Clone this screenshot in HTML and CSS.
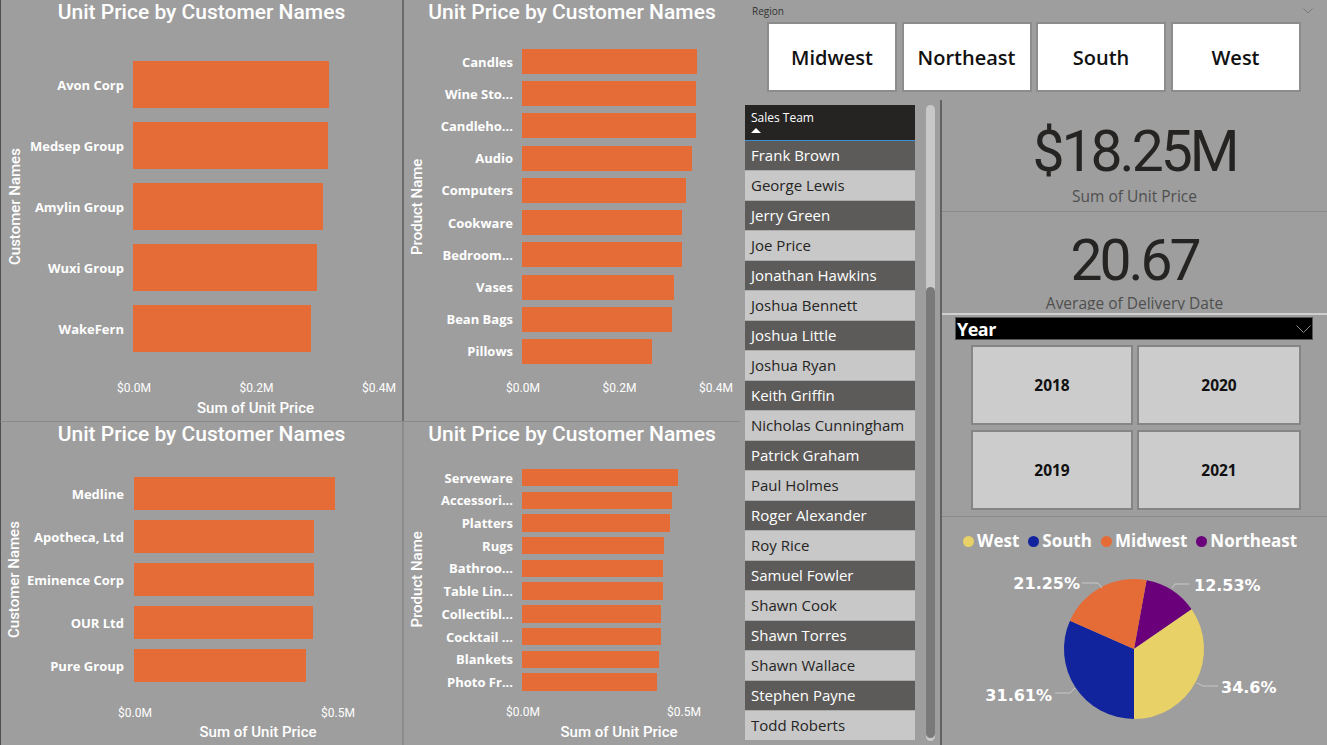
FILE: index.html
```html
<!DOCTYPE html>
<html lang="en">
<head>
<meta charset="utf-8">
<title>Sales Dashboard</title>
<link rel="stylesheet" href="styles.css">
</head>
<body>
<div class="dash">
  <div class="charts">
    <section class="chart chart-a">
      <h2 class="chart-title">Unit Price by Customer Names</h2>
      <div class="chart-body">
        <div class="y-title">Customer Names</div>
        <div class="rows">
          <div class="row"><span class="lbl">Avon Corp</span><span class="bar" style="width:196px"></span></div>
          <div class="row"><span class="lbl">Medsep Group</span><span class="bar" style="width:195px"></span></div>
          <div class="row"><span class="lbl">Amylin Group</span><span class="bar" style="width:190px"></span></div>
          <div class="row"><span class="lbl">Wuxi Group</span><span class="bar" style="width:184px"></span></div>
          <div class="row"><span class="lbl">WakeFern</span><span class="bar" style="width:178px"></span></div>
        </div>
      </div>
      <div class="ticks"><span class="tick"><span>$0.0M</span></span><span class="tick"><span>$0.2M</span></span><span class="tick"><span>$0.4M</span></span></div>
      <div class="x-title">Sum of Unit Price</div>
    </section>

    <section class="chart chart-b">
      <h2 class="chart-title">Unit Price by Customer Names</h2>
      <div class="chart-body">
        <div class="y-title">Product Name</div>
        <div class="rows">
          <div class="row"><span class="lbl">Candles</span><span class="bar" style="width:175px"></span></div>
          <div class="row"><span class="lbl">Wine Sto...</span><span class="bar" style="width:174px"></span></div>
          <div class="row"><span class="lbl">Candleho...</span><span class="bar" style="width:174px"></span></div>
          <div class="row"><span class="lbl">Audio</span><span class="bar" style="width:170px"></span></div>
          <div class="row"><span class="lbl">Computers</span><span class="bar" style="width:164px"></span></div>
          <div class="row"><span class="lbl">Cookware</span><span class="bar" style="width:160px"></span></div>
          <div class="row"><span class="lbl">Bedroom...</span><span class="bar" style="width:160px"></span></div>
          <div class="row"><span class="lbl">Vases</span><span class="bar" style="width:152px"></span></div>
          <div class="row"><span class="lbl">Bean Bags</span><span class="bar" style="width:150px"></span></div>
          <div class="row"><span class="lbl">Pillows</span><span class="bar" style="width:130px"></span></div>
        </div>
      </div>
      <div class="ticks"><span class="tick"><span>$0.0M</span></span><span class="tick"><span>$0.2M</span></span><span class="tick"><span>$0.4M</span></span></div>
    </section>

    <section class="chart chart-c">
      <h2 class="chart-title">Unit Price by Customer Names</h2>
      <div class="chart-body">
        <div class="y-title">Customer Names</div>
        <div class="rows">
          <div class="row"><span class="lbl">Medline</span><span class="bar" style="width:201px"></span></div>
          <div class="row"><span class="lbl">Apotheca, Ltd</span><span class="bar" style="width:180px"></span></div>
          <div class="row"><span class="lbl">Eminence Corp</span><span class="bar" style="width:180px"></span></div>
          <div class="row"><span class="lbl">OUR Ltd</span><span class="bar" style="width:179px"></span></div>
          <div class="row"><span class="lbl">Pure Group</span><span class="bar" style="width:172px"></span></div>
        </div>
      </div>
      <div class="ticks"><span class="tick"><span>$0.0M</span></span><span class="tick"><span>$0.5M</span></span></div>
      <div class="x-title">Sum of Unit Price</div>
    </section>

    <section class="chart chart-d">
      <h2 class="chart-title">Unit Price by Customer Names</h2>
      <div class="chart-body">
        <div class="y-title">Product Name</div>
        <div class="rows">
          <div class="row"><span class="lbl">Serveware</span><span class="bar" style="width:156px"></span></div>
          <div class="row"><span class="lbl">Accessori...</span><span class="bar" style="width:150px"></span></div>
          <div class="row"><span class="lbl">Platters</span><span class="bar" style="width:148px"></span></div>
          <div class="row"><span class="lbl">Rugs</span><span class="bar" style="width:142px"></span></div>
          <div class="row"><span class="lbl">Bathroo...</span><span class="bar" style="width:141px"></span></div>
          <div class="row"><span class="lbl">Table Lin...</span><span class="bar" style="width:141px"></span></div>
          <div class="row"><span class="lbl">Collectibl...</span><span class="bar" style="width:139px"></span></div>
          <div class="row"><span class="lbl">Cocktail ...</span><span class="bar" style="width:139px"></span></div>
          <div class="row"><span class="lbl">Blankets</span><span class="bar" style="width:137px"></span></div>
          <div class="row"><span class="lbl">Photo Fr...</span><span class="bar" style="width:135px"></span></div>
        </div>
      </div>
      <div class="ticks"><span class="tick"><span>$0.0M</span></span><span class="tick"><span>$0.5M</span></span></div>
      <div class="x-title">Sum of Unit Price</div>
    </section>
  </div>

  <div class="side">
    <section class="region">
      <div class="region-head">
        <span>Region</span>
        <svg class="chev" width="10" height="6" viewBox="0 0 10 6"><polyline points="0.5,0.5 5,5 9.5,0.5" fill="none" stroke="#7a7a7a" stroke-width="1"/></svg>
      </div>
      <div class="region-btns">
        <div class="region-btn">Midwest</div>
        <div class="region-btn">Northeast</div>
        <div class="region-btn">South</div>
        <div class="region-btn">West</div>
      </div>
    </section>

    <div class="side-body">
      <section class="team">
        <div class="team-list">
          <div class="team-head">
            <div>Sales Team</div>
            <div class="sort-tri"></div>
          </div>
          <div class="team-rows">
            <div class="trow dark">Frank Brown</div>
            <div class="trow light">George Lewis</div>
            <div class="trow dark">Jerry Green</div>
            <div class="trow light">Joe Price</div>
            <div class="trow dark">Jonathan Hawkins</div>
            <div class="trow light">Joshua Bennett</div>
            <div class="trow dark">Joshua Little</div>
            <div class="trow light">Joshua Ryan</div>
            <div class="trow dark">Keith Griffin</div>
            <div class="trow light">Nicholas Cunningham</div>
            <div class="trow dark">Patrick Graham</div>
            <div class="trow light">Paul Holmes</div>
            <div class="trow dark">Roger Alexander</div>
            <div class="trow light">Roy Rice</div>
            <div class="trow dark">Samuel Fowler</div>
            <div class="trow light">Shawn Cook</div>
            <div class="trow dark">Shawn Torres</div>
            <div class="trow light">Shawn Wallace</div>
            <div class="trow dark">Stephen Payne</div>
            <div class="trow light">Todd Roberts</div>
          </div>
        </div>
        <div class="scroll"><div class="thumb"></div></div>
      </section>

      <div class="side-right">
        <section class="kpi kpi-1">
          <div class="kpi-value">$18.25M</div>
          <div class="kpi-label">Sum of Unit Price</div>
        </section>
        <section class="kpi kpi-2">
          <div class="kpi-value">20.67</div>
          <div class="kpi-label">Average of Delivery Date</div>
        </section>
        <section class="year">
          <div class="year-head">
            <span>Year</span>
            <svg width="15" height="8" viewBox="0 0 15 8"><polyline points="0.5,0.5 7.5,7.5 14.5,0.5" fill="none" stroke="#8a8a8a" stroke-width="1"/></svg>
          </div>
          <div class="year-grid">
            <div class="year-btn">2018</div>
            <div class="year-btn">2020</div>
            <div class="year-btn">2019</div>
            <div class="year-btn">2021</div>
          </div>
        </section>
        <section class="pie">
          <div class="legend">
            <span class="leg"><span class="dot dot-west"></span>West</span>
            <span class="leg"><span class="dot dot-south"></span>South</span>
            <span class="leg"><span class="dot dot-mid"></span>Midwest</span>
            <span class="leg"><span class="dot dot-ne"></span>Northeast</span>
          </div>
          <svg class="pie-svg" width="385" height="182" viewBox="0 0 385 182">
            <path d="M192 86 L204.55 17.13 A70 70 0 0 1 249.65 46.30 Z" fill="#6b007b"/>
            <path d="M192 86 L249.65 46.30 A70 70 0 0 1 192 156 Z" fill="#e8d166"/>
            <path d="M192 86 L192 156 A70 70 0 0 1 127.95 57.75 Z" fill="#12239e"/>
            <path d="M192 86 L127.95 57.75 A70 70 0 0 1 204.55 17.13 Z" fill="#e66c37"/>
            <polyline class="leader" points="140,20 156,20 160,25"/>
            <polyline class="leader" points="230,25 233,21 247,21"/>
            <polyline class="leader" points="255,120 261,123 276,123"/>
            <polyline class="leader" points="113,130 128,130 133,125"/>
            <text class="pct" x="138" y="26" text-anchor="end">21.25%</text>
            <text class="pct" x="252" y="28">12.53%</text>
            <text class="pct" x="279" y="130">34.6%</text>
            <text class="pct" x="110" y="138" text-anchor="end">31.61%</text>
          </svg>
        </section>
      </div>
    </div>
  </div>
</div>
</body>
</html>
```
FILE: styles.css
```css
* { box-sizing: border-box; }

body {
  margin: 0;
  background: #9e9e9e;
  font-family: "Open Sans", "Noto Sans", sans-serif;
}

.dash {
  display: flex;
  width: 1327px;
  height: 745px;
  overflow: hidden;
  background: #9e9e9e;
}

/* ---------- bar charts ---------- */
.charts {
  flex: none;
  display: grid;
  grid-template-columns: 402px 338px;
  grid-template-rows: 421px 324px;
}

.chart {
  display: flex;
  flex-direction: column;
  overflow: hidden;
  color: #fff;
}

.chart-a {
  border-left: 1px solid #4f4f4f;
  --mt: 37px; --yw: 28px; --lw: 104px; --gap: 14px; --bh: 47px;
  --tm: 29px; --t0: 133px; --ts: 122.5px; --xl: 132px; --xw: 245px; --xm: 4px;
}
.chart-b {
  border-left: 2px solid #6b6b6b;
  --mt: 25px; --yw: 26px; --lw: 92px; --gap: 7.22px; --bh: 25px;
  --tm: 17px; --t0: 119px; --ts: 96.5px;
}
.chart-c {
  border-left: 1px solid #4f4f4f;
  border-top: 1px solid #8a8a8a;
  --mt: 31px; --yw: 26px; --lw: 107px; --gap: 10px; --bh: 33px;
  --tm: 23.5px; --t0: 134px; --ts: 203px; --xl: 133px; --xw: 248px; --xm: 3.5px;
}
.chart-d {
  border-left: 2px solid #8c8c8c;
  border-top: 1px solid #8a8a8a;
  --mt: 23px; --yw: 26px; --lw: 92px; --gap: 5.3px; --bh: 17.4px;
  --tm: 14.5px; --t0: 119px; --ts: 161px; --xl: 118px; --xw: 194px; --xm: 3.5px;
}

.chart-title {
  margin: 0;
  font: 500 21px Roboto, sans-serif;
  line-height: 24px;
  text-align: center;
  white-space: nowrap;
}

.chart-body {
  display: flex;
  margin-top: var(--mt);
}

.y-title {
  flex: none;
  width: var(--yw);
  writing-mode: vertical-rl;
  transform: rotate(180deg);
  text-align: center;
  font: 500 15px Roboto, sans-serif;
  line-height: var(--yw);
  white-space: nowrap;
}

.rows {
  display: flex;
  flex-direction: column;
  gap: var(--gap);
}

.row {
  display: flex;
  align-items: center;
  height: var(--bh);
}

.lbl {
  flex: none;
  width: var(--lw);
  padding-right: 9px;
  text-align: right;
  white-space: nowrap;
  font: 700 13px "Open Sans", sans-serif;
}
.chart-c .lbl { padding-right: 10px; }

.bar {
  height: 100%;
  background: #e66c37;
}

.ticks {
  display: flex;
  margin-top: var(--tm);
  padding-left: var(--t0);
  height: 14px;
  font: 400 12px Roboto, sans-serif;
  line-height: 14px;
  white-space: nowrap;
}
.tick { flex: none; width: var(--ts); }
.tick span { display: inline-block; transform: translateX(-50%); }

.x-title {
  margin-top: var(--xm);
  margin-left: var(--xl);
  width: var(--xw);
  text-align: center;
  font: 500 15px Roboto, sans-serif;
  line-height: 18px;
  white-space: nowrap;
}

/* ---------- right side ---------- */
.side {
  flex: none;
  width: 587px;
  display: flex;
  flex-direction: column;
}

.region {
  height: 100px;
  padding: 4px 14px 0 12px;
}
.region-head {
  display: flex;
  justify-content: space-between;
  align-items: center;
  height: 14px;
  font: 400 10px "Open Sans", sans-serif;
  line-height: 14px;
  color: #333;
}
.region-btns {
  display: flex;
  gap: 4.5px;
  margin: 4px 0 0 15px;
}
.region-btn {
  width: 130px;
  height: 70px;
  background: #fff;
  border: 2px solid #8c8c8c;
  display: flex;
  align-items: center;
  justify-content: center;
  font: 600 20px "Open Sans", sans-serif;
  color: #111;
}

.side-body {
  display: flex;
  height: 645px;
}

.team {
  flex: none;
  width: 200px;
  padding: 5px 5px 0;
  display: flex;
  gap: 11px;
}
.team-list {
  flex: none;
  width: 170px;
  display: flex;
  flex-direction: column;
}
.team-head {
  height: 36px;
  background: #252423;
  border-bottom: 1px solid #3d8fd8;
  padding: 5px 6px 0;
  color: #fff;
  font: 400 12px "Open Sans", sans-serif;
  line-height: 16px;
}
.sort-tri {
  margin-top: 2px;
  width: 0;
  height: 0;
  border-left: 5px solid transparent;
  border-right: 5px solid transparent;
  border-bottom: 5px solid #fff;
}
.team-rows {
  display: flex;
  flex-direction: column;
  gap: 1px;
  background: #acacac;
}
.trow {
  height: 29px;
  padding-left: 6px;
  font: 400 15px "Open Sans", sans-serif;
  line-height: 29px;
  white-space: nowrap;
}
.trow.dark { background: #5c5b59; color: #fff; }
.trow.light { background: #c8c8c8; color: #252423; }

.scroll {
  flex: none;
  width: 9px;
  height: 636px;
  background: #c8c8c8;
  border-radius: 5px;
  display: flex;
  flex-direction: column;
}
.thumb {
  flex: 1;
  margin: 182px 0 3px;
  background: #7a7a7a;
  border-radius: 5px;
}

.side-right {
  flex: 1;
  border-left: 2px solid #626262;
  display: flex;
  flex-direction: column;
}

.kpi {
  text-align: center;
  color: #252423;
  overflow: hidden;
}
.kpi-1 {
  height: 112px;
  border-bottom: 1px solid #8a8a8a;
  padding-top: 22px;
}
.kpi-2 {
  height: 98px;
  margin-bottom: 3px;
  padding-top: 19px;
}
.kpi-value {
  font: 400 57px Roboto, sans-serif;
  line-height: 60px;
  letter-spacing: -3px;
}
.kpi-label {
  margin-top: 4px;
  font: 400 15.5px "Open Sans", sans-serif;
  line-height: 20px;
  color: #4f4f4f;
}
.kpi-2 .kpi-label { margin-top: 2px; }

.year {
  height: 204px;
  border-top: 2px solid #cfcfcf;
  border-bottom: 1px solid #8a8a8a;
  padding: 2px 14px 0 13px;
}
.year-head {
  height: 23px;
  background: #000;
  border: 1px solid #555;
  display: flex;
  justify-content: space-between;
  align-items: center;
  padding: 0 1px 0 1px;
  color: #fff;
  font: 700 18px "Open Sans", sans-serif;
  letter-spacing: -0.5px;
}
.year-grid {
  display: grid;
  grid-template-columns: 162px 164px;
  grid-auto-rows: 80px;
  gap: 5px 4px;
  margin: 5px 0 0 16px;
}
.year-btn {
  background: #cccccc;
  border: 2px solid #858585;
  display: flex;
  align-items: center;
  justify-content: center;
  font: 700 15.5px "Open Sans", sans-serif;
  color: #111;
}

.pie {
  flex: 1;
  display: flex;
  flex-direction: column;
}
.legend {
  display: flex;
  align-items: center;
  gap: 9px;
  height: 24px;
  margin: 12px 0 10px 21px;
  font: 700 17px "Open Sans", sans-serif;
  line-height: 24px;
  color: #fff;
}
.leg {
  display: flex;
  align-items: center;
  gap: 3px;
}
.dot {
  width: 11px;
  height: 11px;
  border-radius: 50%;
}
.dot-west { background: #e8d166; }
.dot-south { background: #12239e; }
.dot-mid { background: #e66c37; }
.dot-ne { background: #6b007b; }

.pie-svg { display: block; }
.leader { fill: none; stroke: #c8c8c8; stroke-width: 1; }
.pct { font: 700 16px "DejaVu Sans", sans-serif; fill: #fff; }
```
